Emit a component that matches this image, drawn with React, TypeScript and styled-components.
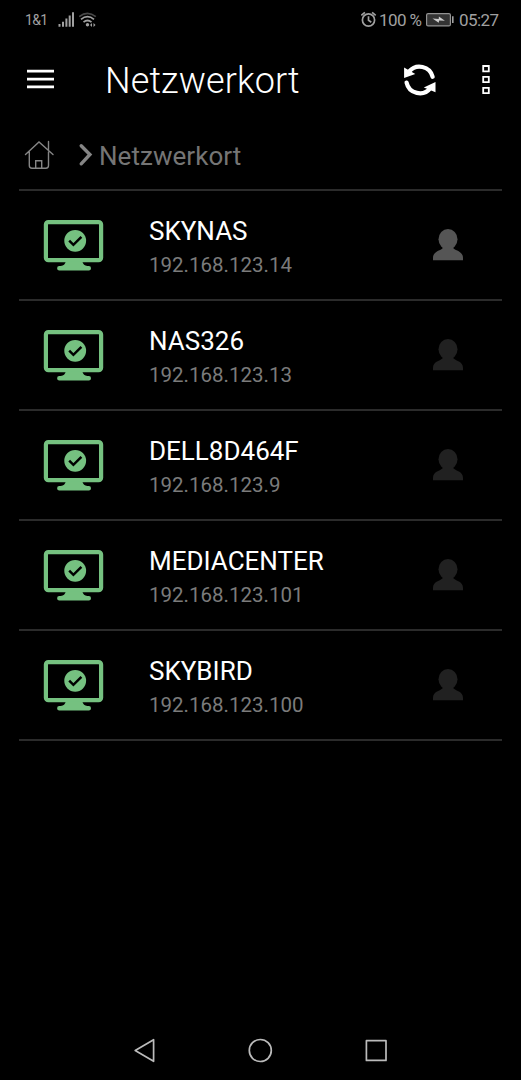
import React from "react";
import styled, { createGlobalStyle } from "styled-components";

const GlobalStyle = createGlobalStyle`
  * { box-sizing: border-box; }
  body { margin: 0; background: #000; font-family: Roboto, "Liberation Sans", sans-serif; }
  svg { display: block; flex: none; }
`;

const Screen = styled.div`
  display: flex;
  flex-direction: column;
  width: 521px;
  height: 1080px;
  background: #000;
  overflow: hidden;
`;

const StatusBar = styled.header`
  display: flex;
  align-items: center;
  height: 40px;
  padding: 0 22px 0 25px;
  color: #a0a0a0;
`;

const Carrier = styled.span`
  width: 33px;
  font-size: 14px;
  line-height: 40px;
  letter-spacing: -0.7px;
  white-space: nowrap;
`;

const StatusRight = styled.div`
  display: flex;
  align-items: center;
  margin-left: auto;
`;

const StatusText = styled.span<{ $width: number }>`
  width: ${(p) => p.$width}px;
  font-size: 17px;
  line-height: 40px;
  letter-spacing: -0.6px;
  white-space: nowrap;
`;

const Toolbar = styled.div`
  display: flex;
  align-items: center;
  height: 80px;
  padding: 0 24px;
`;

const IconButton = styled.button<{ $width: number }>`
  width: ${(p) => p.$width}px;
  height: 40px;
  padding: 0;
  border: 0;
  background: none;
`;

const Title = styled.h1`
  flex: 1;
  margin: 2px 0 0 46px;
  font-size: 36px;
  font-weight: 300;
  line-height: 42px;
  letter-spacing: 0.1px;
  color: #fff;
`;

const Breadcrumb = styled.nav`
  display: flex;
  align-items: center;
  height: 71px;
  margin: 0 19px;
  border-bottom: 2px solid #2b2b2b;
`;

const Crumb = styled.span`
  margin: 2px 0 0 6px;
  font-size: 26px;
  font-weight: 400;
  line-height: 32px;
  letter-spacing: 0.05px;
  color: #757575;
`;

const HostList = styled.ul`
  flex: 1;
  margin: 0 19px;
  padding: 0;
  list-style: none;
`;

const HostRow = styled.li`
  display: flex;
  align-items: center;
  height: 110px;
  padding: 0 39px 0 24px;
  border-bottom: 2px solid #2b2b2b;
`;

const HostText = styled.div`
  flex: 1;
  margin-left: 45px;
  padding-top: 6px;
`;

const HostName = styled.div`
  font-size: 26px;
  line-height: 34px;
  color: #fff;
`;

const HostAddress = styled.div`
  font-size: 20.5px;
  line-height: 34px;
  color: #7b7b7b;
`;

const NavigationBar = styled.footer`
  display: flex;
  align-items: center;
  justify-content: space-between;
  height: 60px;
  padding: 0 132px 0 130px;
`;

const SignalIcon = () => (
  <svg width="21" height="40" viewBox="0 0 21 40" fill="#a0a0a0">
    <path d="M.5 24h2v2.700h-2zM4 21.700h2v5H4zM7.400 18.500h2v8.200h-2zM10.700 15.500h2v11.200h-2zM14 12.300h2v14.400h-2z" />
  </svg>
);

const WifiIcon = () => (
  <svg width="18" height="40" viewBox="0 0 18 40" fill="none" stroke="#a0a0a0" strokeWidth="1.700">
    <path d="M.2 16.700Q8.500 10 16.800 16.700" stroke="#484848" />
    <path d="M2 19.300Q8.500 14 15 19.300M4.500 22.200Q8.500 18.800 12.500 22.200" />
    <circle cx="8.500" cy="24.800" r="1.700" fill="#a0a0a0" stroke="none" />
    <path d="M11 25l2-1.900v3.800zM16.500 25l-2-1.900v3.800z" fill="#a0a0a0" stroke="none" />
  </svg>
);

const AlarmIcon = () => (
  <svg width="18" height="40" viewBox="0 0 18 40" fill="none" stroke="#a0a0a0" strokeWidth="1.700">
    <circle cx="7.500" cy="20" r="6.100" />
    <path d="M7.500 16.300V20.300l2.800 1.900M.3 15.300l3.600-3M14.700 15.300l-3.600-3" />
  </svg>
);

const BatteryIcon = () => (
  <svg width="33" height="40" viewBox="0 0 33 40" fill="none">
    <rect x=".6" y="13.600" width="23.800" height="12.300" rx="1.500" fill="#333" stroke="#929292" strokeWidth="1.200" />
    <path d="M26 16.300h1.600v6.700H26z" fill="#a0a0a0" />
    <path d="m6.500 18.600 6.200.5.200-2.700 6 4.400-5.700-.3-.5 2.300z" fill="#ccc" />
  </svg>
);

const MenuIcon = () => (
  <svg width="35" height="40" viewBox="0 0 35 40" fill="#fff">
    <path d="M3 9.800h27v2.800H3zM3 17.700h27v2.700H3zM3 25.500h27v2.800H3z" />
  </svg>
);

const RefreshIcon = () => (
  <svg width="34" height="40" viewBox="0 0 34 40">
    <path d="M6.200 11.500A13.500 13.500 0 0 1 29.600 16.700M3.600 22.600A13.500 13.500 0 0 0 27.500 28" fill="none" stroke="#fff" strokeWidth="4.300" strokeLinecap="round" />
    <path d="M1.100 7.500v10.500l11.200-4zM32.500 22v10.200L20.800 27.500z" fill="#fff" />
  </svg>
);

const OverflowIcon = () => (
  <svg width="16" height="40" viewBox="0 0 16 40" fill="none" stroke="#fff" strokeWidth="1.800">
    <path d="M5.200 6h5.600v5.400H5.200zM5.200 16.800h5.600v5.400H5.200zM5.200 27.800h5.600v5.400H5.200z" />
  </svg>
);

const HomeIcon = () => (
  <svg width="59" height="40" viewBox="0 0 59 40" fill="none" stroke="#858585" strokeWidth="1.400" strokeLinecap="round">
    <path d="M6.500 19.500 20 7 34 19.500M29.500 14.800V6.500M10.300 17v13.500q0 2.700 2.700 2.700h13.800q2.700 0 2.700-2.700V17M16.700 33v-7.300h6V33" />
  </svg>
);

const ChevronIcon = () => (
  <svg width="15" height="40" viewBox="0 0 15 40" fill="none" stroke="#858585" strokeWidth="3.400" strokeLinecap="round">
    <path d="M3.200 10.700 11.900 19.500 3.200 28.800" />
  </svg>
);

const MonitorIcon = () => (
  <svg width="61" height="52" viewBox="0 0 61 52">
    <rect x="2.900" y="3.100" width="55.200" height="38.100" rx="2.500" fill="none" stroke="#75c180" strokeWidth="4.200" />
    <path d="M22.800 42.500h16.500q1 4 5 4.500h1.500q2.200 0 2.200 2.200t-2.200 2.200H16.300q-2.200 0-2.200-2.200t2.200-2.200h1.500q4-.5 5-4.500z" fill="#75c180" />
    <circle cx="32.200" cy="21.800" r="10.900" fill="#75c180" />
    <path d="m26.200 21.600 4.200 4.200 8-8" fill="none" stroke="#000" strokeWidth="2.500" />
  </svg>
);

const UserIcon = ({ active }: { active?: boolean }) => (
  <svg width="30" height="32" viewBox="0 0 30 32" fill={active ? "#555" : "#212121"}>
    <ellipse cx="15" cy="10.200" rx="9.500" ry="10.200" />
    <path d="M9.500 16h11v3.500C23.500 22 30 22.500 30 29v2.300H0V29c0-6.500 6.500-7 9.500-9.500z" />
  </svg>
);

const BackIcon = () => (
  <svg width="26" height="30" viewBox="0 0 26 30" fill="none" stroke="#bbb" strokeWidth="1.700" strokeLinejoin="round">
    <path d="M5.200 15.500 23.600 4.700v21.600z" />
  </svg>
);

const HomeCircleIcon = () => (
  <svg width="26" height="30" viewBox="0 0 26 30" fill="none" stroke="#bbb" strokeWidth="1.700">
    <circle cx="13.300" cy="15.500" r="11" />
  </svg>
);

const RecentIcon = () => (
  <svg width="26" height="30" viewBox="0 0 26 30" fill="none" stroke="#bbb" strokeWidth="1.700" strokeLinejoin="round">
    <path d="M3.400 5.700h19.600v19.700H3.400z" />
  </svg>
);

const hosts = [
  { name: "SKYNAS", address: "192.168.123.14", active: true },
  { name: "NAS326", address: "192.168.123.13" },
  { name: "DELL8D464F", address: "192.168.123.9" },
  { name: "MEDIACENTER", address: "192.168.123.101" },
  { name: "SKYBIRD", address: "192.168.123.100" },
];

export default function App() {
  return (
    <Screen>
      <GlobalStyle />
      <StatusBar>
        <Carrier>1&amp;1</Carrier>
        <SignalIcon />
        <WifiIcon />
        <StatusRight>
          <AlarmIcon />
          <StatusText $width={47}>100 %</StatusText>
          <BatteryIcon />
          <StatusText $width={40}>05:27</StatusText>
        </StatusRight>
      </StatusBar>
      <Toolbar>
        <IconButton $width={35} aria-label="Menü"><MenuIcon /></IconButton>
        <Title>Netzwerkort</Title>
        <IconButton $width={75} aria-label="Aktualisieren"><RefreshIcon /></IconButton>
        <IconButton $width={19} aria-label="Mehr"><OverflowIcon /></IconButton>
      </Toolbar>
      <Breadcrumb>
        <HomeIcon />
        <ChevronIcon />
        <Crumb>Netzwerkort</Crumb>
      </Breadcrumb>
      <HostList>
        {hosts.map((host) => (
          <HostRow key={host.name}>
            <MonitorIcon />
            <HostText>
              <HostName>{host.name}</HostName>
              <HostAddress>{host.address}</HostAddress>
            </HostText>
            <UserIcon active={host.active} />
          </HostRow>
        ))}
      </HostList>
      <NavigationBar>
        <BackIcon />
        <HomeCircleIcon />
        <RecentIcon />
      </NavigationBar>
    </Screen>
  );
}
